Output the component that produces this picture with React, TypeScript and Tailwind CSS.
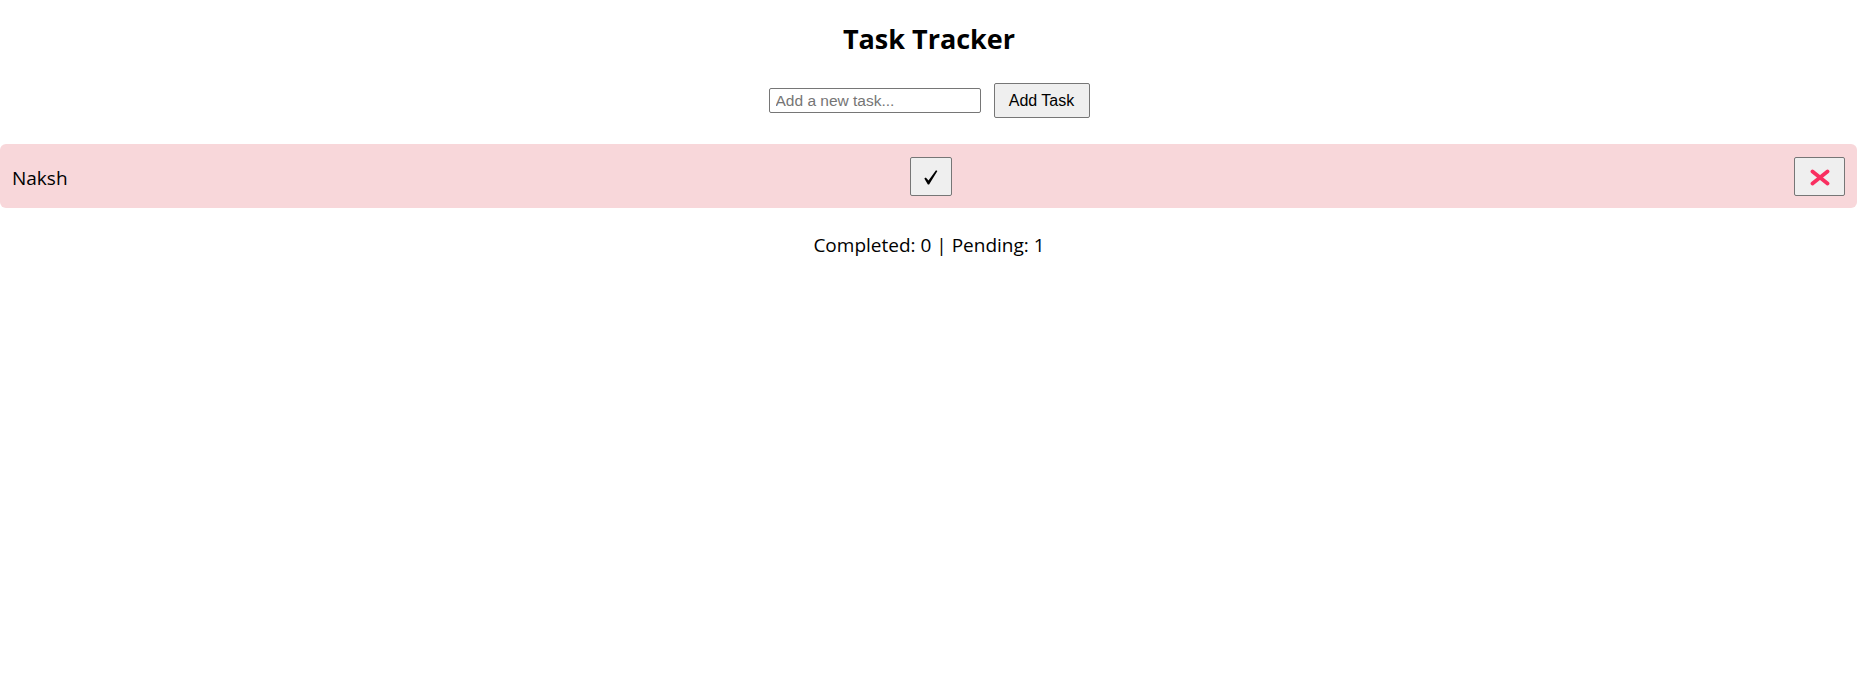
import { useState } from "react";

type Task = { id: number; text: string; done: boolean };

export default function App() {
  const [tasks, setTasks] = useState<Task[]>([{ id: 1, text: "Naksh", done: false }]);
  const [input, setInput] = useState("");

  const completed = tasks.filter((t) => t.done).length;
  const pending = tasks.length - completed;

  const addTask = () => {
    if (!input.trim()) return;
    setTasks([...tasks, { id: Date.now(), text: input.trim(), done: false }]);
    setInput("");
  };

  return (
    <div className="min-h-[693px] bg-white font-['Open_Sans','Noto_Sans',sans-serif] text-black">
      <h1 className="pt-[19px] text-center text-[27px] leading-[40px] font-bold">Task Tracker</h1>

      <div className="mt-[24px] flex items-center justify-center gap-[13px]">
        <input
          value={input}
          onChange={(e) => setInput(e.target.value)}
          placeholder="Add a new task..."
          className="h-[25px] w-[212px] rounded-[2px] border border-[#767676] px-[6px] font-['Liberation_Sans',Arial,sans-serif] text-[15.5px] placeholder:text-[#757575] outline-none"
        />
        <button
          onClick={addTask}
          className="h-[35px] w-[96px] rounded-[2px] border border-[#767676] bg-[#efefef] font-['Liberation_Sans',Arial,sans-serif] text-[16px] text-black"
        >
          Add Task
        </button>
      </div>

      <ul className="mt-[26px] pr-[1px]">
        {tasks.map((task) => (
          <li
            key={task.id}
            className="flex items-center justify-between rounded-[6px] bg-[#f8d7da] px-[12px] pt-[13px] pb-[12px]"
          >
            <span className={`pt-[3px] text-[19px] ${task.done ? "line-through" : ""}`}>{task.text}</span>
            <button
              onClick={() => setTasks(tasks.map((t) => (t.id === task.id ? { ...t, done: !t.done } : t)))}
              className="flex h-[39px] w-[42px] items-center justify-center rounded-[2px] border border-[#767676] bg-[#efefef]"
            >
              <svg width="14" height="15" viewBox="0 0 14 15" className="mt-[2px]">
                <path d="M0.3 8.6 L1.8 7.6 L4.5 10.6 L12 0.2 L13.4 1.1 L5.1 14.4 L3.9 14.4 Z" fill="#000" />
              </svg>
            </button>
            <button
              onClick={() => setTasks(tasks.filter((t) => t.id !== task.id))}
              className="flex h-[39px] w-[51px] items-center justify-center rounded-[2px] border border-[#767676] bg-[#efefef]"
            >
              <svg width="20" height="17" viewBox="0 0 20 17" className="mt-[1px]">
                <path d="M2.5 2.5 L17.5 14.5 M17.5 2.5 L2.5 14.5" stroke="#f92f60" strokeWidth="3.8" strokeLinecap="round" />
              </svg>
            </button>
          </li>
        ))}
      </ul>

      <p className="mt-[23px] text-center text-[19px]">
        Completed: {completed} | Pending: {pending}
      </p>
    </div>
  );
}
